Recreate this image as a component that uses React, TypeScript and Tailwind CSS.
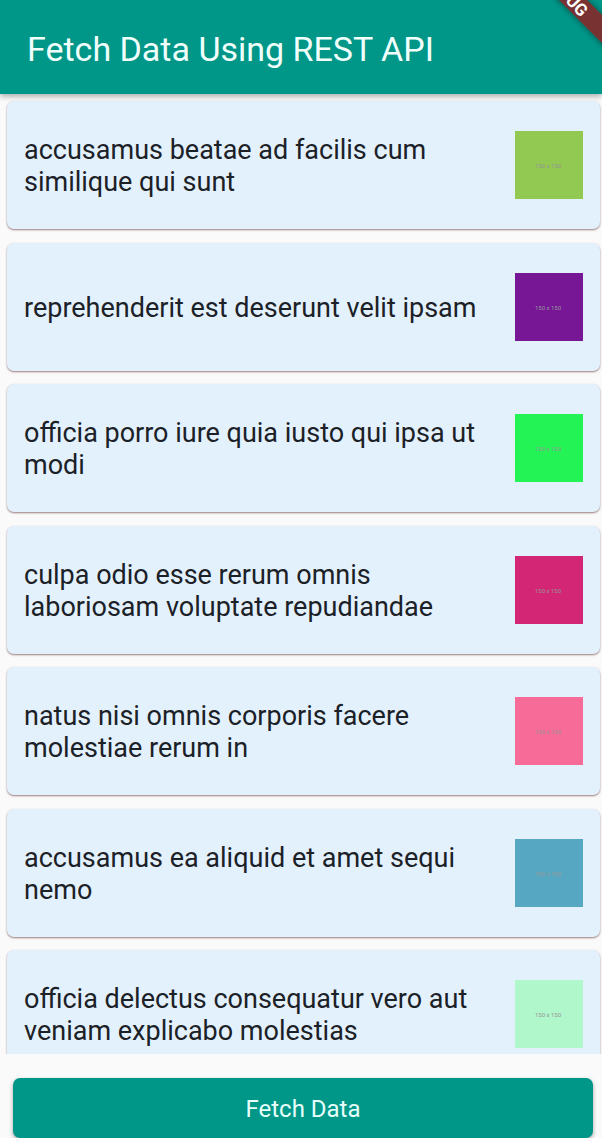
type Photo = { id: number; title: string; color: string };

const photos: Photo[] = [
  { id: 1, title: 'accusamus beatae ad facilis cum similique qui sunt', color: 'bg-[#92c952]' },
  { id: 2, title: 'reprehenderit est deserunt velit ipsam', color: 'bg-[#771796]' },
  { id: 3, title: 'officia porro iure quia iusto qui ipsa ut modi', color: 'bg-[#24f355]' },
  { id: 4, title: 'culpa odio esse rerum omnis laboriosam voluptate repudiandae', color: 'bg-[#d32776]' },
  { id: 5, title: 'natus nisi omnis corporis facere molestiae rerum in', color: 'bg-[#f66b97]' },
  { id: 6, title: 'accusamus ea aliquid et amet sequi nemo', color: 'bg-[#56a8c2]' },
  { id: 7, title: 'officia delectus consequatur vero aut veniam explicabo molestias', color: 'bg-[#b0f7cc]' },
];

function PhotoCard({ photo }: { photo: Photo }) {
  return (
    <li className="flex min-h-32 items-center justify-between gap-6 rounded-[7px] bg-[#e3f1fd] px-[17px] shadow-[0_1px_2px_rgba(90,40,40,0.6)] odd:mb-[14px] even:mb-[13px]">
      <p className="pt-px text-[27px] leading-8 text-[#1b2127]">{photo.title}</p>
      <div
        className={`flex size-[68px] shrink-0 items-center justify-center pr-[2px] text-[6px] text-[#969696] ${photo.color}`}
      >
        150 x 150
      </div>
    </li>
  );
}

function DebugRibbon() {
  return (
    <svg className="absolute top-0 right-0" width="72" height="72" viewBox="0 0 72 72" aria-hidden="true">
      <defs>
        <filter id="ribbon-shadow" x="-50%" y="-50%" width="200%" height="200%">
          <feDropShadow dx="0" dy="0" stdDeviation="3" floodColor="#000" floodOpacity="0.5" />
        </filter>
      </defs>
      <g transform="translate(43 0) rotate(45)">
        <rect x="-60" y="-10" width="160" height="20" fill="#783233" filter="url(#ribbon-shadow)" />
        <text x="18" y="7" textAnchor="end" fill="#fff" fontSize="17" fontWeight="700" fontFamily="Roboto, sans-serif">
          DEBUG
        </text>
      </g>
    </svg>
  );
}

export default function App() {
  return (
    <div className="flex h-screen flex-col overflow-hidden bg-[#fafafa] font-[Roboto,sans-serif]">
      <header className="relative z-10 flex h-[94px] shrink-0 items-center bg-[#009688] px-[27px] pt-[3px] shadow-[0_2px_6px_rgba(0,0,0,0.35)]">
        <h1 className="text-[34px] leading-10 text-[#f0fffc]">Fetch Data Using REST API</h1>
        <DebugRibbon />
      </header>
      <main className="min-h-0 flex-1 overflow-hidden pt-[7px] pr-[2px] pl-[7px]">
        <ul>
          {photos.map((photo) => (
            <PhotoCard key={photo.id} photo={photo} />
          ))}
        </ul>
      </main>
      <footer className="shrink-0 pt-6 pr-[9px] pl-[13px]">
        <button
          type="button"
          className="h-[60px] w-full rounded-[7px] bg-[#009688] pt-[2px] text-[24px] text-[#e6fffa] shadow-[0_2px_4px_rgba(0,0,0,0.35)]"
        >
          Fetch Data
        </button>
      </footer>
    </div>
  );
}
